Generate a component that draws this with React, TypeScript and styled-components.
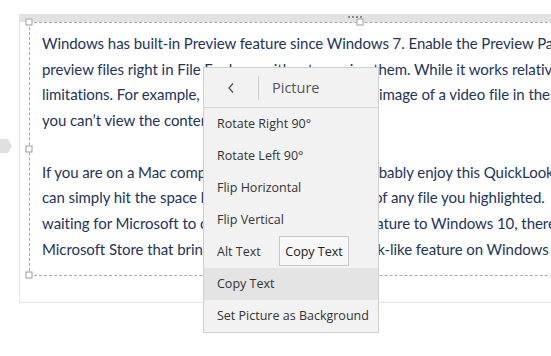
import React from 'react';
import styled, { createGlobalStyle } from 'styled-components';

const Global = createGlobalStyle`
    html, body {
        margin: 0;
        padding: 0;
        background: #fff;
        overflow: hidden;
    }
`

const Page = styled.div`
    position: relative;
    width: 551px;
    height: 356px;
    overflow: hidden;
    padding: 14px 0 0 19px;
    box-sizing: border-box;
`

const Frame = styled.div`
    width: 640px;
    border: 1px solid #e3e3e3;
    border-top: 8px solid #e2e2e2;
    padding: 0 0 26px 9px;
    box-sizing: border-box;
`

const Selection = styled.div`
    position: relative;
    border: 1px dashed #a8a8a8;
    border-right: none;
    padding: 8px 0 13px 12px;
`

interface HandleProps {
    x: number;
    y: string;
}

const Handle = styled.span<HandleProps>`
    position: absolute;
    left: ${p => p.x}px;
    top: ${p => p.y};
    width: 5px;
    height: 5px;
    background: #fff;
    border: 1px solid #9a9a9a;
    transform: translate(-50%, -50%);
`

const Grip = styled.span`
    position: absolute;
    left: 318px;
    top: -7px;
    display: flex;
    gap: 2px;
    & > i {
        width: 2px;
        height: 2px;
        background: #8a8a8a;
    }
`

const Para = styled.p`
    margin: 0 0 25.7px;
    font-family: "Lato", "Liberation Sans", sans-serif;
    font-size: 15px;
    letter-spacing: -0.06px;
    line-height: 25.7px;
    color: #22345c;
    &:last-child {
        margin-bottom: 0;
    }
    & > span {
        display: block;
        white-space: nowrap;
    }
`

const Tab = styled.div`
    position: absolute;
    left: 0;
    top: 139px;
    width: 12px;
    height: 14px;
    background: #e0e0e0;
    clip-path: polygon(0 0, 65% 0, 100% 50%, 65% 100%, 0 100%);
`

const Menu = styled.div`
    position: absolute;
    left: 203px;
    top: 67px;
    width: 176px;
    background: #f2f2f2;
    border: 1px solid #cfcfcf;
    box-sizing: border-box;
    font-family: "Open Sans", "Noto Sans", sans-serif;
`

const MenuHead = styled.div`
    display: flex;
    align-items: center;
    height: 40px;
    border-bottom: 1px solid #d6d6d6;
    box-sizing: border-box;
`

const Back = styled.div`
    width: 55px;
    height: 24px;
    display: flex;
    align-items: center;
    justify-content: center;
    border-right: 1px solid #cdcdcd;
    box-sizing: border-box;
`

const Title = styled.div`
    padding-left: 13px;
    font-size: 14.5px;
    color: #555;
`

interface ItemProps {
    active?: boolean;
}

const Item = styled.div<ItemProps>`
    height: 32px;
    line-height: 32px;
    padding-left: 13px;
    font-size: 12.5px;
    color: #333;
    background: ${p => p.active ? '#e4e4e4' : 'transparent'};
`

const Tip = styled.div`
    position: absolute;
    left: 279px;
    top: 236px;
    width: 70px;
    height: 30px;
    box-sizing: border-box;
    border: 1px solid #c8c8c8;
    background: #f7f7f7;
    display: flex;
    align-items: center;
    justify-content: center;
    font-family: "Open Sans", "Noto Sans", sans-serif;
    font-size: 12.5px;
    color: #222;
`

const items = [
    'Rotate Right 90°',
    'Rotate Left 90°',
    'Flip Horizontal',
    'Flip Vertical',
    'Alt Text',
    'Copy Text',
    'Set Picture as Background',
]

const App: React.FC = () => {
    return (<Page>
        <Global />
        <Frame>
            <Selection>
                <Handle x={-1} y={'-1px'} />
                <Handle x={-1} y={'50%'} />
                <Handle x={-1} y={'100%'} />
                <Handle x={330} y={'-1px'} />
                <Grip><i /><i /><i /><i /></Grip>
                <Para>
                    <span>Windows has built-in Preview feature since Windows 7. Enable the Preview Pane to</span>
                    <span>preview files right in File Explorer without opening them. While it works relatively well, it has</span>
                    <span>limitations. For example, you can only see the static image of a video file in the Preview Pane, and</span>
                    <span>you can’t view the contents of a zip file.</span>
                </Para>
                <Para>
                    <span>If you are on a Mac computer or MacBooks, you probably enjoy this QuickLook feature, where you</span>
                    <span>can simply hit the space bar to see a quick preview of any file you highlighted.</span>
                    <span>waiting for Microsoft to officially bring this smart feature to Windows 10, there's an app in the</span>
                    <span>Microsoft Store that brings the great Mac QuickLook-like feature on Windows 10.</span>
                </Para>
            </Selection>
        </Frame>
        <Tab />
        <Menu>
            <MenuHead>
                <Back>
                    <svg width="8" height="12" viewBox="0 0 8 12">
                        <path d="M6 1.5 L2 6 L6 10.5" fill="none" stroke="#555" strokeWidth="1.3" />
                    </svg>
                </Back>
                <Title>Picture</Title>
            </MenuHead>
            {items.map(item => <Item key={item} active={item === 'Copy Text'}>{item}</Item>)}
        </Menu>
        <Tip>Copy Text</Tip>
    </Page>)
}
export default App;
